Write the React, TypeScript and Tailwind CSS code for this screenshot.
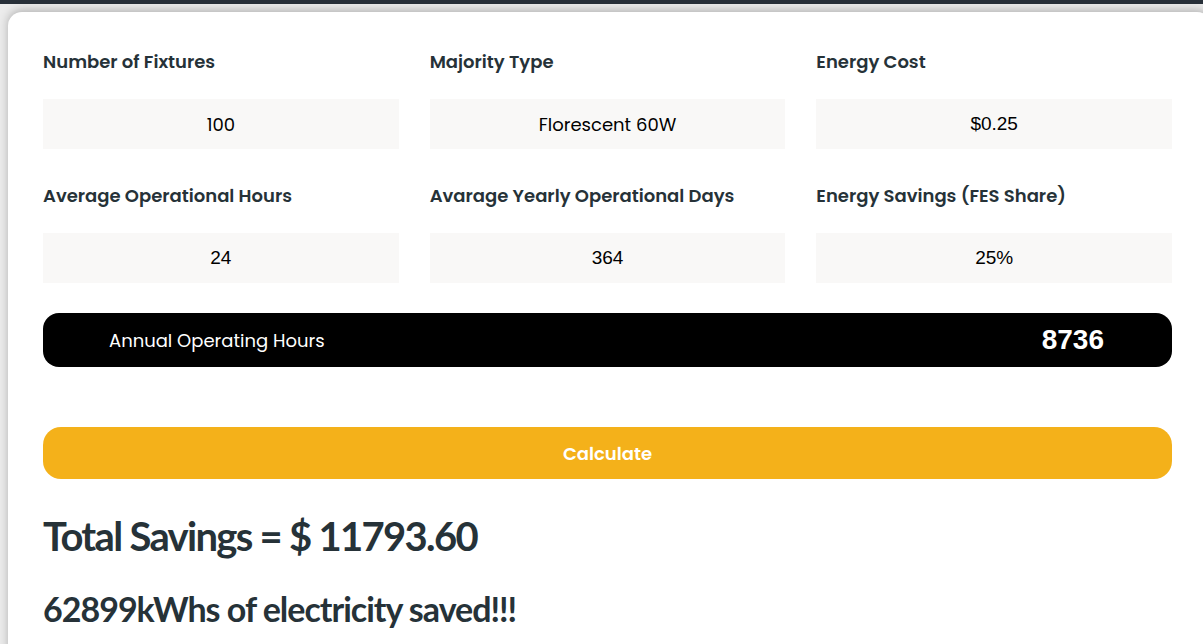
import React from 'react';

const fields = [
  { label: 'Number of Fixtures', value: '100', arial: false },
  { label: 'Majority Type', value: 'Florescent 60W', arial: false },
  { label: 'Energy Cost', value: '$0.25', arial: true },
  { label: 'Average Operational Hours', value: '24', arial: true },
  { label: 'Avarage Yearly Operational Days', value: '364', arial: true },
  { label: 'Energy Savings (FES Share)', value: '25%', arial: true },
];

export default function App() {
  return (
    <div className="min-h-screen bg-[#ececec] font-['Poppins','Open_Sans',sans-serif]">
      <div className="h-[4px] bg-[#283039]" />
      <div className="ml-[8px] mt-[8px] -mr-[8px] rounded-t-[14px] bg-white pb-10 pl-[35px] pr-[39px] pt-[36px] shadow-[0_-2px_10px_rgba(0,0,0,0.25)]">
        <div className="grid grid-cols-3 gap-x-[31px] gap-y-[33px]">
          {fields.map((f) => (
            <div key={f.label}>
              <div className="h-[27px] text-[18px] font-semibold leading-[27px] text-[#263238]">
                {f.label}
              </div>
              {f.arial ? (
                <div className="mt-[24px] flex h-[50px] items-center justify-center bg-[#f9f8f7] font-['Liberation_Sans',sans-serif] text-[19px] text-black">
                  {f.value}
                </div>
              ) : (
                <div className="mt-[24px] flex h-[50px] items-center justify-center bg-[#f9f8f7] pt-[1px] text-[18px] text-black">
                  {f.value}
                </div>
              )}
            </div>
          ))}
        </div>

        <div className="mt-[30px] flex h-[54px] items-center justify-between rounded-[16px] bg-black pl-[66px] pr-[68px] text-white">
          <span className="text-[18px]">Annual Operating Hours</span>
          <span className="font-['Liberation_Sans',sans-serif] text-[28px] font-bold">8736</span>
        </div>

        <button className="mt-[60px] flex h-[52px] w-full items-center justify-center rounded-[18px] bg-[#f4b11a] text-[18px] font-semibold text-white">
          Calculate
        </button>

        <h1 className="mt-[32px] font-['Lato',sans-serif] text-[40px] font-bold leading-[50px] tracking-[-1.7px] text-[#263238]">
          Total Savings = $ 11793.60
        </h1>
        <h2 className="mt-[27px] font-['Lato',sans-serif] text-[34px] font-bold leading-[42px] tracking-[-1px] text-[#263238]">
          62899kWhs of electricity saved!!!
        </h2>
      </div>
    </div>
  );
}
